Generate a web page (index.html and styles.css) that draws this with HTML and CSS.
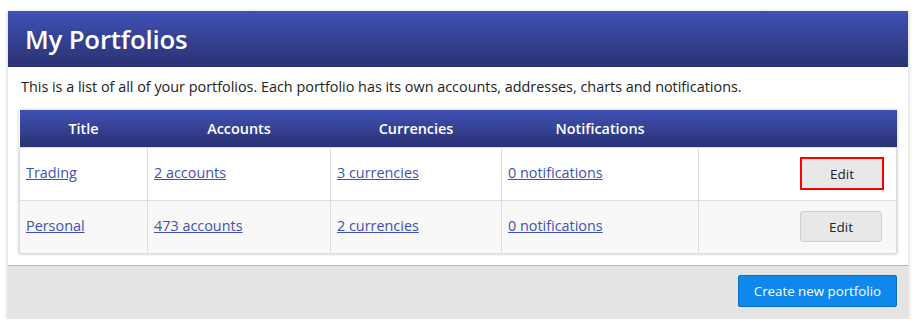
FILE: index.html
```html
<!DOCTYPE html>
<html>
<head>
<meta charset="utf-8">
<link rel="stylesheet" href="styles.css">
</head>
<body>
<div class="card">
  <div class="card-header"><h1>My Portfolios</h1></div>
  <div class="card-body">
    <p class="desc">This is a list of all of your portfolios. Each portfolio has its own accounts, addresses, charts and notifications.</p>
    <table class="grid">
      <thead>
        <tr><th class="c1">Title</th><th class="c2">Accounts</th><th class="c3">Currencies</th><th class="c4">Notifications</th><th class="c5"></th></tr>
      </thead>
      <tbody>
        <tr><td><a href="#">Trading</a></td><td><a href="#">2 accounts</a></td><td><a href="#">3 currencies</a></td><td><a href="#">0 notifications</a></td><td class="act"><button class="edit focus">Edit</button></td></tr>
        <tr class="alt"><td><a href="#">Personal</a></td><td><a href="#">473 accounts</a></td><td><a href="#">2 currencies</a></td><td><a href="#">0 notifications</a></td><td class="act"><button class="edit">Edit</button></td></tr>
      </tbody>
    </table>
  </div>
  <div class="card-footer"><button class="primary">Create new portfolio</button></div>
</div>
</body>
</html>
```
FILE: styles.css
```css
html, body { margin: 0; padding: 0; background: #fff; }
body { font-family: "Open Sans", "Noto Sans", sans-serif; font-size: 14.4px; color: #222; padding: 11px 7px 0 8px; }
.card { width: 900px; background: #fff; box-shadow: 0 1px 4px rgba(0,0,0,0.25); }
.card-header { height: 56px; background: linear-gradient(#3f51b5, #2b3272); display: flex; align-items: center; padding-left: 17px; }
.card-header h1 { margin: 0; color: #fff; font-size: 25.8px; font-weight: 600; letter-spacing: -0.2px; }
.card-body { padding: 0 11px 11px 11px; }
.desc { margin: 0; height: 43px; line-height: 40px; padding-left: 2px; font-size: 14.4px; color: #222; }
.grid { width: 878px; border-collapse: collapse; box-shadow: 0 0 3px rgba(0,0,0,0.25); }
.grid th { height: 37px; padding: 0; background: linear-gradient(#3f51b5, #2b3272); color: #fff; font-weight: 600; font-size: 14.4px; text-align: center; }
.c1 { width: 128px; } .c2 { width: 183px; } .c3 { width: 171px; } .c4 { width: 197px; }
.grid td { height: 49px; padding: 0 7px 3px 6px; border: 1px solid #dcdcdc; background: #fff; }
.grid td.act { padding: 1px 7px 2px 6px; }
.grid tr.alt td { background: #f8f8f8; }
.grid a { color: #3f51b5; text-decoration: underline; }
.act { text-align: right; }
.edit { width: 82px; height: 31px; background: #e8e8e8; border: 1px solid #cfcfcf; border-radius: 3px; font-family: inherit; font-size: 13.5px; color: #222; margin-right: 7px; }
.edit.focus { border: 2px solid #ff0000; border-radius: 0; width: 84px; height: 33px; margin-right: 5px; }
.card-footer { background: #e4e4e4; border-top: 1px solid #b5b5b5; height: 53px; display: flex; align-items: center; justify-content: flex-end; padding-right: 11px; }
.primary { background: #0e88ec; color: #fff; border: 1px solid #0a6fc4; border-radius: 2px; height: 32px; padding: 0 15px; font-family: inherit; font-size: 13.3px; margin-bottom: 3px; }
```
